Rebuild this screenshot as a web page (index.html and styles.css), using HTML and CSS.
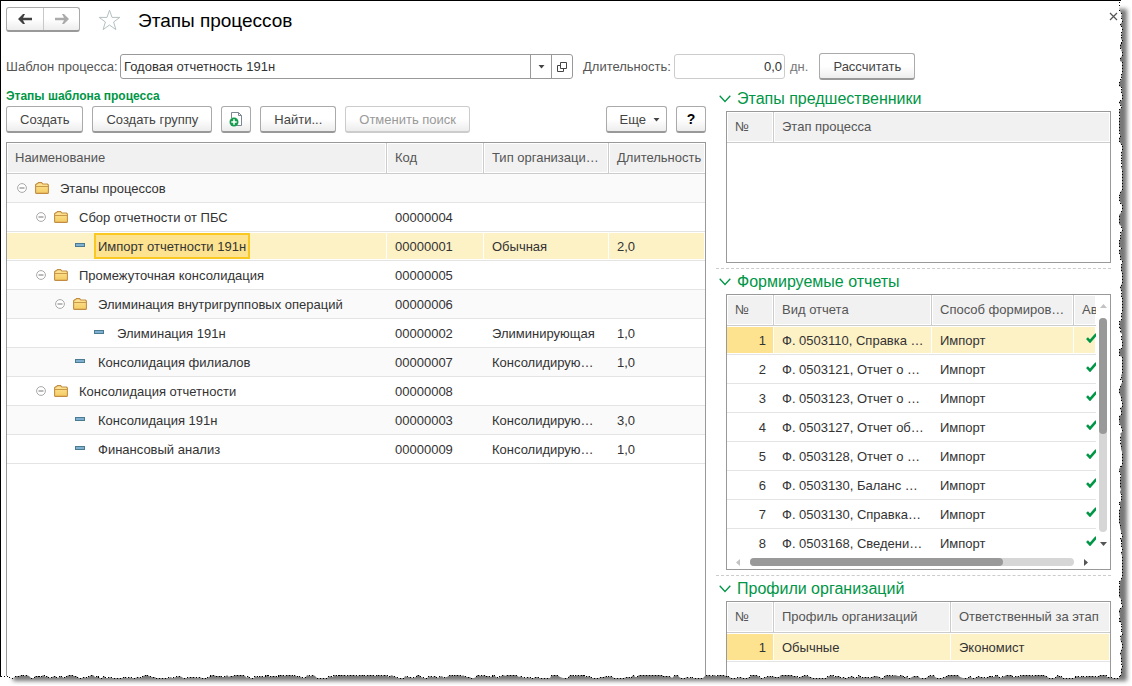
FILE: index.html
```html
<!DOCTYPE html>
<html lang="ru">
<head>
<meta charset="utf-8">
<title>Этапы процессов</title>
<link rel="stylesheet" href="styles.css">
</head>
<body>
<svg class="defs" width="0" height="0" aria-hidden="true">
  <defs>
    <linearGradient id="folder-fill" x1="0" y1="0" x2="0" y2="1"><stop offset="0" stop-color="#ffe79a"/><stop offset="1" stop-color="#f3cb62"/></linearGradient>
    <symbol id="i-minus" viewBox="0 0 10 10"><circle cx="5" cy="5" r="4.4" fill="#fff" stroke="#a8a8a8"/><path d="M2.5 5h5" stroke="#777"/></symbol>
    <symbol id="i-folder" viewBox="0 0 14 12"><path d="M.6 10.4V2.8L1.600 1.800h.8L3.400.6h3.200l1.200 1.400h4.600l1 1v7.400q0 1-1 1H1.6q-1 0-1-1z" fill="url(#folder-fill)" stroke="#c28d42" stroke-width="1.1"/><path d="M1 4.5h12" stroke="#c99a4c"/></symbol>
    <symbol id="i-leaf" viewBox="0 0 14 12"><rect x="2.5" y="3.5" width="9" height="3" fill="#7fb0d2" stroke="#4a7b91"/></symbol>
    <symbol id="i-check" viewBox="0 0 11 10"><path d="M1 5.2 4 8.4 10.4 1" fill="none" stroke="#009646" stroke-width="2.6"/></symbol>
    <symbol id="i-chevron" viewBox="0 0 12 8"><path d="M.7.8 6 6.5 11.300.8" fill="none" stroke="#009646" stroke-width="1.3"/></symbol>
  </defs>
</svg>
<div class="window">
  <header class="titlebar">
    <div class="nav">
      <button type="button" aria-label="Назад"><svg width="16" height="12" viewBox="0 0 16 12"><path d="M1 6 6 1h2L6 4.700h9v2.600H6L8 11H6z" fill="#404040"/></svg></button>
      <button type="button" aria-label="Вперед"><svg width="16" height="12" viewBox="0 0 16 12"><path d="M15 6l-5-5H8l2 3.700H1v2.600h9L8 11h2z" fill="#ababab"/></svg></button>
    </div>
    <button type="button" class="plain star" aria-label="В избранное"><svg width="23" height="22" viewBox="0 0 23 22"><path d="M11.500 1.200 14 8.400h7.800l-6.200 4.600 2.300 7.600-6.400-4.600-6.400 4.600 2.300-7.600L1.200 8.400H9z" fill="#fff" stroke="#b4c0c0"/></svg></button>
    <h1>Этапы процессов</h1>
    <button type="button" class="plain close" aria-label="Закрыть"><svg width="9" height="9" viewBox="0 0 9 9"><path d="m1 1 7 7M8 1 1 8" stroke="#555" stroke-width="1.2"/></svg></button>
  </header>

  <div class="params">
    <label class="l-tpl" for="tpl">Шаблон процесса:</label>
    <div class="combo">
      <input id="tpl" type="text" value="Годовая отчетность 191н">
      <button type="button" aria-label="Выбрать"><svg width="7" height="4" viewBox="0 0 7 4"><path d="M.5 0h6l-3 3.500z" fill="#444"/></svg></button>
      <button type="button" aria-label="Открыть"><svg width="10" height="10" viewBox="0 0 10 10"><path d="M3.500.5h6v6h-6zM3 3.500H.5v6h6V7" fill="none" stroke="#444"/></svg></button>
    </div>
    <label class="l-dur" for="dur">Длительность:</label>
    <input id="dur" class="duration" type="text" value="0,0">
    <span class="unit">дн.</span>
    <button type="button" class="btn">Рассчитать</button>
  </div>

  <main class="columns">
    <section class="left">
      <h2 class="caption">Этапы шаблона процесса</h2>
      <div class="toolbar">
        <button type="button" class="btn">Создать</button>
        <button type="button" class="btn">Создать группу</button>
        <button type="button" class="btn square" aria-label="Скопировать"><svg width="16" height="16" viewBox="0 0 16 16"><path d="M3.500 7V1.500h7l3 3v10H9" fill="#fff" stroke="#7c8794"/><path d="M10.500 1.500v3h3" fill="none" stroke="#7c8794"/><circle cx="6" cy="11" r="4.500" fill="#169b4d"/><path d="M6 8.300v5.400M3.300 11h5.400" stroke="#fff" stroke-width="1.500"/></svg></button>
        <button type="button" class="btn">Найти...</button>
        <button type="button" class="btn" disabled>Отменить поиск</button>
        <span class="spacer"></span>
        <button type="button" class="btn more">Еще <svg width="7" height="4" viewBox="0 0 7 4"><path d="M.5 0h6l-3 3.500z" fill="#444"/></svg></button>
        <button type="button" class="btn square help">?</button>
      </div>
      <div class="grid fill">
        <table class="striped">
          <colgroup><col><col class="c-code"><col class="c-type"><col class="c-days"></colgroup>
          <thead><tr><th>Наименование</th><th>Код</th><th>Тип организаци…</th><th class="cut">Длительность (</th></tr></thead>
          <tbody>
            <tr><td><div class="node l0"><svg class="tg"><use href="#i-minus"/></svg><svg class="ic"><use href="#i-folder"/></svg><span>Этапы процессов</span></div></td><td></td><td></td><td></td></tr>
            <tr><td><div class="node l1"><svg class="tg"><use href="#i-minus"/></svg><svg class="ic"><use href="#i-folder"/></svg><span>Сбор отчетности от ПБС</span></div></td><td>00000004</td><td></td><td></td></tr>
            <tr class="sel"><td><div class="node l2"><i class="tg"></i><svg class="ic"><use href="#i-leaf"/></svg><span class="cur">Импорт отчетности 191н</span></div></td><td>00000001</td><td>Обычная</td><td>2,0</td></tr>
            <tr><td><div class="node l1"><svg class="tg"><use href="#i-minus"/></svg><svg class="ic"><use href="#i-folder"/></svg><span>Промежуточная консолидация</span></div></td><td>00000005</td><td></td><td></td></tr>
            <tr><td><div class="node l2"><svg class="tg"><use href="#i-minus"/></svg><svg class="ic"><use href="#i-folder"/></svg><span>Элиминация внутригрупповых операций</span></div></td><td>00000006</td><td></td><td></td></tr>
            <tr><td><div class="node l3"><i class="tg"></i><svg class="ic"><use href="#i-leaf"/></svg><span>Элиминация 191н</span></div></td><td>00000002</td><td>Элиминирующая</td><td>1,0</td></tr>
            <tr><td><div class="node l2"><i class="tg"></i><svg class="ic"><use href="#i-leaf"/></svg><span>Консолидация филиалов</span></div></td><td>00000007</td><td>Консолидирую…</td><td>1,0</td></tr>
            <tr><td><div class="node l1"><svg class="tg"><use href="#i-minus"/></svg><svg class="ic"><use href="#i-folder"/></svg><span>Консолидация отчетности</span></div></td><td>00000008</td><td></td><td></td></tr>
            <tr><td><div class="node l2"><i class="tg"></i><svg class="ic"><use href="#i-leaf"/></svg><span>Консолидация 191н</span></div></td><td>00000003</td><td>Консолидирую…</td><td>3,0</td></tr>
            <tr><td><div class="node l2"><i class="tg"></i><svg class="ic"><use href="#i-leaf"/></svg><span>Финансовый анализ</span></div></td><td>00000009</td><td>Консолидирую…</td><td>1,0</td></tr>
          </tbody>
        </table>
      </div>
    </section>

    <aside class="right">
      <section class="panel">
        <h2><svg width="12" height="8"><use href="#i-chevron"/></svg>Этапы предшественники</h2>
        <div class="grid empty">
          <table>
            <colgroup><col class="c-num"><col></colgroup>
            <thead><tr><th>№</th><th>Этап процесса</th></tr></thead>
          </table>
        </div>
      </section>

      <section class="panel">
        <h2><svg width="12" height="8"><use href="#i-chevron"/></svg>Формируемые отчеты</h2>
        <div class="grid">
          <div class="scroll-area">
            <div class="viewport">
              <table>
                <colgroup><col class="c-num"><col><col class="c-way"><col class="c-auto"></colgroup>
                <thead><tr><th>№</th><th>Вид отчета</th><th>Способ формиров…</th><th class="cut">Ав</th></tr></thead>
                <tbody>
                  <tr class="sel"><td class="num">1</td><td>Ф. 0503110, Справка …</td><td>Импорт</td><td class="chk"><svg><use href="#i-check"/></svg></td></tr>
                  <tr><td class="num">2</td><td>Ф. 0503121, Отчет о …</td><td>Импорт</td><td class="chk"><svg><use href="#i-check"/></svg></td></tr>
                  <tr><td class="num">3</td><td>Ф. 0503123, Отчет о …</td><td>Импорт</td><td class="chk"><svg><use href="#i-check"/></svg></td></tr>
                  <tr><td class="num">4</td><td>Ф. 0503127, Отчет об…</td><td>Импорт</td><td class="chk"><svg><use href="#i-check"/></svg></td></tr>
                  <tr><td class="num">5</td><td>Ф. 0503128, Отчет о …</td><td>Импорт</td><td class="chk"><svg><use href="#i-check"/></svg></td></tr>
                  <tr><td class="num">6</td><td>Ф. 0503130, Баланс …</td><td>Импорт</td><td class="chk"><svg><use href="#i-check"/></svg></td></tr>
                  <tr><td class="num">7</td><td>Ф. 0503130, Справка…</td><td>Импорт</td><td class="chk"><svg><use href="#i-check"/></svg></td></tr>
                  <tr><td class="num">8</td><td>Ф. 0503168, Сведени…</td><td>Импорт</td><td class="chk"><svg><use href="#i-check"/></svg></td></tr>
                </tbody>
              </table>
            </div>
            <div class="vbar">
              <svg width="7" height="4" viewBox="0 0 7 4"><path d="M0 4h7L3.500 0z" fill="#c3c3c3"/></svg>
              <div class="track"><div class="thumb"></div></div>
              <svg width="7" height="4" viewBox="0 0 7 4"><path d="M0 0h7L3.500 4z" fill="#555"/></svg>
            </div>
          </div>
          <div class="hbar">
            <svg width="4" height="7" viewBox="0 0 4 7"><path d="M4 0v7L0 3.500z" fill="#c3c3c3"/></svg>
            <div class="track"><div class="thumb"></div></div>
            <svg width="4" height="7" viewBox="0 0 4 7"><path d="M0 0v7l4-3.500z" fill="#555"/></svg>
          </div>
        </div>
      </section>

      <section class="panel last">
        <h2><svg width="12" height="8"><use href="#i-chevron"/></svg>Профили организаций</h2>
        <div class="grid fill">
          <table>
            <colgroup><col class="c-num"><col><col class="c-resp"></colgroup>
            <thead><tr><th>№</th><th>Профиль организаций</th><th>Ответственный за этап</th></tr></thead>
            <tbody><tr class="sel"><td class="num">1</td><td>Обычные</td><td>Экономист</td></tr></tbody>
          </table>
        </div>
      </section>
    </aside>
  </main>
</div>
<svg class="torn" aria-hidden="true"></svg>
<script src="torn.js"></script>
</body>
</html>
```
FILE: styles.css
```css
* { box-sizing: border-box; }
body {
  margin: 0;
  background: #fff;
  color: #333;
  font: 13px/16px "Liberation Sans", Arial, sans-serif;
}
.defs { position: absolute; }
h1, h2 { margin: 0; font-weight: normal; }
button, input { font: inherit; color: inherit; margin: 0; }
svg { display: block; flex: none; }

.window {
  height: 100vh;
  overflow: hidden;
  display: flex;
  flex-direction: column;
  border-top: 1px solid #000;
  border-left: 1px solid #000;
  padding: 6px 21px 0 5px;
}

.titlebar { display: flex; align-items: center; height: 25px; margin-bottom: 21px; }
.nav {
  display: flex;
  height: 25px;
  border: 1px solid #aaa;
  border-bottom: 2px solid #999;
  border-radius: 3px;
  background: linear-gradient(#fff 50%, #ededed);
}
.nav button {
  width: 36px;
  padding: 0;
  border: 0;
  background: none;
  display: flex;
  align-items: center;
  justify-content: center;
}
.nav button + button { border-left: 1px solid #c8c8c8; }
.plain { padding: 0; border: 0; background: none; }
.star { margin: 0 17px 0 18px; }
h1 { flex: 1; padding-top: 2px; font-size: 19px; line-height: 24px; color: #000; }
.close { margin-right: -7px; margin-bottom: 6px; }

.params { display: flex; align-items: center; height: 27px; margin-bottom: 9px; }
.params label, .unit { color: #555; white-space: nowrap; }
.l-tpl { width: 112px; }
.l-dur { width: 88px; }
.combo {
  display: flex;
  flex: 0 1 453px;
  min-width: 0;
  height: 25px;
  margin: 0 10px 0 2px;
  border: 1px solid #999;
  border-radius: 3px;
}
.combo input { flex: 1; min-width: 0; border: 0; padding: 0 3px; background: none; }
.combo button {
  width: 21px;
  padding: 0;
  border: 0;
  border-left: 1px solid #999;
  background: none;
  display: flex;
  align-items: center;
  justify-content: center;
}
.duration {
  width: 111px;
  height: 25px;
  margin: 0 5px 0 3px;
  padding: 0 2px;
  border: 1px solid #ccc;
  border-radius: 3px;
  text-align: right;
}
.unit { color: #777; margin-right: 11px; }

.btn {
  display: flex;
  align-items: center;
  justify-content: center;
  height: 27px;
  padding: 1px 13px 0;
  border: 1px solid #aaa;
  border-bottom: 2px solid #999;
  border-radius: 3px;
  background: linear-gradient(#fff 50%, #ededed);
  color: #444;
  white-space: nowrap;
}
.btn:disabled { color: #999; border-color: #ccc; }
.btn.square { width: 30px; padding: 0; }
.btn.help { color: #000; font-weight: bold; font-size: 14px; }
.btn.more { gap: 7px; padding-right: 6px; }

.columns {
  flex: 1;
  min-height: 0;
  display: grid;
  grid-template-columns: 700fr 395fr;
  gap: 10px;
}
.left, .right { display: flex; flex-direction: column; min-width: 0; min-height: 0; }
.caption { font-size: 12px; font-weight: bold; line-height: 15px; margin-bottom: 2px; color: #009646; }
.toolbar { display: flex; gap: 9px; margin-bottom: 9px; }
.spacer { flex: 1; }

.grid { border: 1px solid #999; background: #fff; overflow: hidden; }
.grid.fill { flex: 1; }
.grid.empty { height: 152px; }
table { width: 100%; table-layout: fixed; border-collapse: separate; border-spacing: 0; }
th, td {
  padding: 0 8px;
  text-align: left;
  font-weight: normal;
  white-space: nowrap;
}
th {
  height: 31px;
  background: #f1f1f1;
  color: #555;
  border-right: 1px solid #ccc;
  border-bottom: 1px solid #ccc;
  box-shadow: inset 0 0 0 1px #fff;
}
th:last-child { border-right: 0; }
th.cut { padding-right: 0; overflow: hidden; }
td { height: 29px; padding-top: 2px; border-bottom: 1px solid #e4e4e4; }
.striped tbody tr:nth-child(odd) { background: #fafafa; }
tr.sel td { background: #fdf1c6; box-shadow: inset -1px 0 #fff, inset 0 1px #fff, inset 0 -1px #fff; }
tr.sel td.num { background: #fde38f; }
td.num { text-align: right; }
td.chk { padding: 0 0 4px 12px; overflow: hidden; }
.chk svg { width: 11px; height: 10px; }
.c-code { width: 97px; }
.c-type { width: 125px; }
.c-days { width: 96px; }
.c-num { width: 47px; }
.c-way { width: 142px; }
.c-auto { width: 22px; }
.c-resp { width: 159px; }

td:has(.node) { padding-top: 0; }
.node { display: flex; align-items: center; height: 26px; padding-left: 2px; margin-right: -8px; }
.node.l1 { padding-left: 21px; }
.node.l2 { padding-left: 40px; }
.node.l3 { padding-left: 59px; }
.tg { width: 10px; height: 10px; margin-right: 8px; flex: none; }
.ic { width: 14px; height: 12px; margin-right: 7px; }
.node span { padding: 4px 2px 2px; border: 2px solid transparent; }
.node .cur { border-color: #f9c822; background: #fde38f; }

.panel h2 {
  display: flex;
  align-items: center;
  gap: 6px;
  padding: 0 0 2px 3px;
  font-size: 16px;
  line-height: 20px;
  color: #009646;
}
.panel .grid { margin-left: 10px; }
.panel + .panel { margin-top: 5px; padding-top: 3px; border-top: 1px dashed #ccc; }
.panel.last { flex: 1; display: flex; flex-direction: column; }

.scroll-area { display: flex; height: 260px; }
.viewport { flex: 1; min-width: 0; overflow: hidden; }
.vbar { width: 14px; display: flex; flex-direction: column; align-items: center; padding: 9px 0; }
.vbar .track { flex: 1; width: 8px; margin: 10px 0; }
.vbar .thumb { height: 54%; }
.hbar { display: flex; align-items: center; height: 14px; padding: 0 22px 0 9px; }
.hbar .track { flex: 1; height: 8px; margin: 0 10px; }
.hbar .thumb { width: 78%; height: 100%; }
.track { background: #d6d6d6; border-radius: 4px; }
.thumb { background: #999; border-radius: 4px; }

.torn { position: fixed; inset: 0; width: 100%; height: 100%; pointer-events: none; }
```
FILE: torn.js
```js
// Draws the ragged right and bottom edges of the sheet together with its shadow.
(function () {
  var svg = document.querySelector('.torn');
  function draw() {
    var w = window.innerWidth, h = window.innerHeight, seed = 7;
    function rnd() { seed = (seed * 16807) % 2147483647; return seed / 2147483647; }
    var right = w - 11, bottom = h - 9, pts = [[right, 0]], x, y, d = 0;
    function wander() { d = Math.max(-2, Math.min(1, d + Math.round(rnd() * 4 - 2))); return d; }
    for (y = 2; y < bottom; y += 1 + Math.floor(rnd() * 3)) pts.push([right + wander(), y]);
    for (x = right; x > 3; x -= 1 + Math.floor(rnd() * 3)) pts.push([x, bottom + wander()]);
    pts.push([0, bottom]);
    var edge = 'M' + pts.map(function (p) { return p.join(' '); }).join('L');
    var sheet = edge + 'L0 0Z';
    svg.setAttribute('viewBox', '0 0 ' + w + ' ' + h);
    svg.innerHTML =
      '<defs><clipPath id="outside"><path clip-rule="evenodd" d="M0 0H' + w + 'V' + h + 'H0Z' + sheet + '"/></clipPath>' +
      '<filter id="soft"><feGaussianBlur stdDeviation="2"/></filter></defs>' +
      '<g clip-path="url(#outside)"><rect width="' + w + '" height="' + h + '" fill="#fff"/>' +
      '<path d="M13 9H' + (right + 6) + 'V' + (bottom + 4) + 'H13Z" fill="#777" filter="url(#soft)"/></g>' +
      '<path d="' + edge + '" fill="none" stroke="#000" stroke-dasharray="1 2" shape-rendering="crispEdges"/>';
  }
  window.addEventListener('resize', draw);
  draw();
})();
```
